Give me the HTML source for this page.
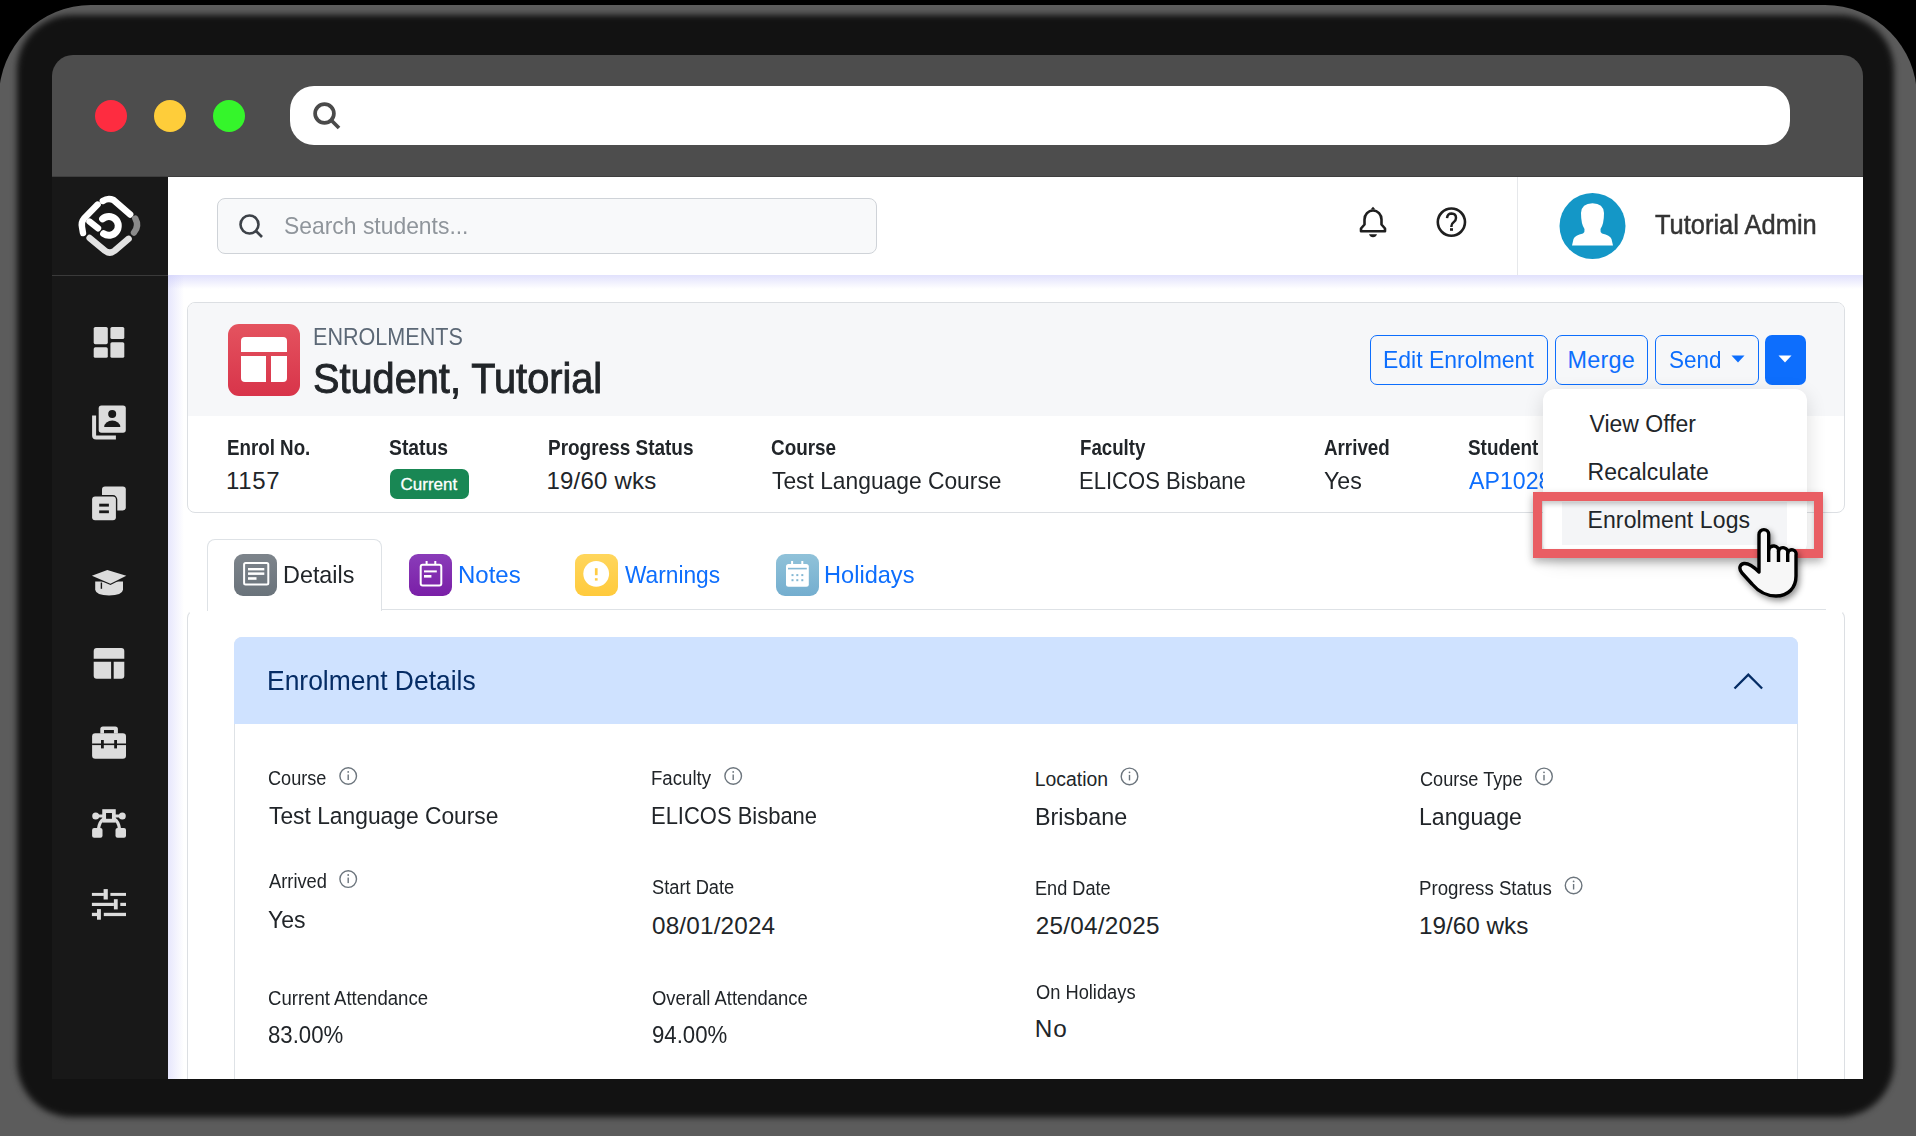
<!DOCTYPE html>
<html><head><meta charset="utf-8"><style>
html,body{margin:0;padding:0;width:1916px;height:1136px;overflow:hidden;background:#000;font-family:"Liberation Sans",sans-serif;}
.a{position:absolute;box-sizing:border-box;}
.t{position:absolute;white-space:nowrap;line-height:1;}
svg{position:absolute;overflow:visible;}
</style></head><body>
<div class="a" style="left:-1px;top:5px;width:1918px;height:1215px;border-radius:92px;background:#5c5c5c;"></div>
<div class="a" style="left:17px;top:15px;width:1877px;height:1102px;border-radius:55px;background:#121212;filter:blur(3px);"></div>

<div style="position:absolute;left:0;top:0;width:1863px;height:1079px;overflow:hidden">
<!-- title bar -->
<div class="a" style="left:52px;top:55px;width:1811px;height:122px;background:#4d4d4d;border-radius:21px 21px 0 0;"></div>
<div class="a" style="left:95px;top:100px;width:32px;height:32px;border-radius:50%;background:#fe2c40;"></div>
<div class="a" style="left:154px;top:100px;width:32px;height:32px;border-radius:50%;background:#fecd3a;"></div>
<div class="a" style="left:212.5px;top:100px;width:32px;height:32px;border-radius:50%;background:#35f52b;"></div>
<div class="a" style="left:290px;top:86.2px;width:1500.3px;height:58.7px;border-radius:24px;background:#fff;"></div>
<div class="a" style="left:52px;top:176px;width:1811px;height:1px;background:#3e3e3e;"></div>
<svg style="left:0;top:0" width="1" height="1"><circle cx="324.5" cy="113.5" r="9.4" fill="none" stroke="#4a4a4a" stroke-width="3.7"/><line x1="331.5" y1="120.5" x2="339" y2="128" stroke="#4a4a4a" stroke-width="3.7"/></svg>
<!-- sidebar -->
<div class="a" style="left:52px;top:177px;width:116px;height:902px;background:#181818;"></div>
<div class="a" style="left:52px;top:275px;width:116px;height:1px;background:#3a3a3a;"></div>
<!-- main -->
<div class="a" style="left:168px;top:177px;width:1695px;height:902px;background:#fff;"></div>
<div class="a" style="left:168px;top:177px;width:16px;height:902px;background:linear-gradient(to right,rgba(225,225,252,.8),rgba(255,255,255,0));"></div>
<div class="a" style="left:168px;top:177px;width:1695px;height:98px;background:#fff;"></div>
<div class="a" style="left:168px;top:275px;width:1695px;height:14px;background:linear-gradient(rgba(200,200,250,.55),rgba(255,255,255,0));"></div>
<div class="a" style="left:1517px;top:177px;width:1px;height:98px;background:#e6e8eb;"></div>
<!-- search -->
<div class="a" style="left:217px;top:198px;width:660px;height:56px;background:#f8f9fa;border:1px solid #cfd3d8;border-radius:8px;"></div>
<svg style="left:0;top:0" width="1" height="1"><circle cx="249.5" cy="224.5" r="9" fill="none" stroke="#3d4248" stroke-width="2.6"/><line x1="256" y1="231" x2="262" y2="237" stroke="#3d4248" stroke-width="2.6"/></svg>
<!-- card 1 -->
<div class="a" style="left:187px;top:302px;width:1658px;height:211px;background:#fff;border:1px solid #dcdfe3;border-radius:8px;overflow:hidden;">
  <div class="a" style="left:0;top:0;width:100%;height:113px;background:#f6f7f9;"></div>
</div>
<div class="a" style="left:228px;top:324px;width:72px;height:72px;border-radius:11px;background:linear-gradient(#e4535f,#d8344a);"></div>
<div class="a" style="left:241px;top:336.5px;width:45.5px;height:15.5px;background:#fff;border-radius:4px 4px 0 0;"></div>
<div class="a" style="left:241px;top:356px;width:25px;height:25.5px;background:#fff;border-radius:0 0 0 4px;"></div>
<div class="a" style="left:270.5px;top:356px;width:16px;height:25.5px;background:#fff;border-radius:0 0 4px 0;"></div>
<!-- badge -->
<div class="a" style="left:390px;top:469px;width:78.5px;height:30px;border-radius:7px;background:#198754;"></div>
<!-- buttons -->
<div class="a" style="left:1370px;top:335px;width:177.5px;height:49.5px;border:1.5px solid #0d6efd;border-radius:7px;"></div>
<div class="a" style="left:1555px;top:335px;width:92.5px;height:49.5px;border:1.5px solid #0d6efd;border-radius:7px;"></div>
<div class="a" style="left:1655px;top:335px;width:103.6px;height:49.5px;border:1.5px solid #0d6efd;border-radius:7px;"></div>
<div class="a" style="left:1765px;top:335px;width:40.6px;height:49.5px;background:#0d6efd;border-radius:7px;"></div>
<svg style="left:0;top:0" width="1" height="1"><path d="M1731.5 355.5h13l-6.5 7z" fill="#0d6efd"/><path d="M1778.5 355.5h13l-6.5 7z" fill="#fff"/></svg>
<!-- tabs -->
<div class="a" style="left:187px;top:610px;width:1658px;height:480px;border:1px solid #dcdfe3;border-top-color:transparent;border-radius:8px 8px 0 0;"></div>
<div class="a" style="left:381px;top:609px;width:1445px;height:1px;background:#dee2e6;"></div>
<div class="a" style="left:207px;top:539px;width:175px;height:72px;background:#fff;border:1px solid #dee2e6;border-bottom:none;border-radius:8px 8px 0 0;"></div>
<!-- tab icons -->
<div class="a" style="left:234px;top:554px;width:43px;height:42px;border-radius:9px;background:linear-gradient(#7d848b,#6a737b);"></div>
<div class="a" style="left:409px;top:554px;width:43px;height:42px;border-radius:9px;background:linear-gradient(#8a3cb9,#7a1fa7);"></div>
<div class="a" style="left:575px;top:554px;width:43px;height:42px;border-radius:9px;background:linear-gradient(#ffd65c,#ffca3c);"></div>
<div class="a" style="left:776px;top:554px;width:43px;height:42px;border-radius:9px;background:linear-gradient(#90c2d9,#74aecf);"></div>
<!-- accordion -->
<div class="a" style="left:234px;top:637px;width:1564px;height:460px;border:1px solid #dee2e6;border-radius:8px 8px 0 0;"></div>
<div class="a" style="left:234px;top:637px;width:1564px;height:87px;background:#cfe2ff;border-radius:8px 8px 0 0;"></div>
<svg style="left:0;top:0" width="1" height="1"><path d="M1734.5 688.5l13.8-13.8 13.8 13.8" fill="none" stroke="#052c65" stroke-width="2.3"/></svg>

<div class="t" id="ph" style="left:284.0px;top:215.0px;font-size:23.4px;color:#8f959b;font-weight:400;transform:scaleX(0.9785);transform-origin:0 0;">Search students...</div>
<div class="t" id="admin" style="left:1655.0px;top:211.0px;font-size:27.5px;color:#343434;font-weight:400;transform:scaleX(0.9253);transform-origin:0 0;-webkit-text-stroke:0.5px #343434;">Tutorial Admin</div>
<div class="t" id="enr" style="left:312.9px;top:325.0px;font-size:24px;color:#5c6876;font-weight:400;transform:scaleX(0.8994);transform-origin:0 0;">ENROLMENTS</div>
<div class="t" id="stu" style="left:312.8px;top:358.0px;font-size:42.5px;color:#212529;font-weight:400;transform:scaleX(0.9344);transform-origin:0 0;-webkit-text-stroke:0.9px #212529;">Student, Tutorial</div>
<div class="t" id="l1" style="left:227.1px;top:437.0px;font-size:22px;color:#212529;font-weight:700;transform:scaleX(0.8521);transform-origin:0 0;">Enrol No.</div>
<div class="t" id="l2" style="left:388.7px;top:437.0px;font-size:22px;color:#212529;font-weight:700;transform:scaleX(0.8788);transform-origin:0 0;">Status</div>
<div class="t" id="l3" style="left:547.5px;top:437.0px;font-size:22px;color:#212529;font-weight:700;transform:scaleX(0.8623);transform-origin:0 0;">Progress Status</div>
<div class="t" id="l4" style="left:771.3px;top:437.0px;font-size:22px;color:#212529;font-weight:700;transform:scaleX(0.8581);transform-origin:0 0;">Course</div>
<div class="t" id="l5" style="left:1080.4px;top:437.0px;font-size:22px;color:#212529;font-weight:700;transform:scaleX(0.8487);transform-origin:0 0;">Faculty</div>
<div class="t" id="l6" style="left:1324.1px;top:437.0px;font-size:22px;color:#212529;font-weight:700;transform:scaleX(0.8533);transform-origin:0 0;">Arrived</div>
<div class="t" id="l7" style="left:1467.9px;top:437.0px;font-size:22px;color:#212529;font-weight:700;transform:scaleX(0.8580);transform-origin:0 0;">Student</div>
<div class="t" id="v1" style="left:226.0px;top:469.0px;font-size:24px;color:#212529;font-weight:400;letter-spacing:0.667px;">1157</div>
<div class="t" id="v3" style="left:546.4px;top:469.0px;font-size:24px;color:#212529;font-weight:400;letter-spacing:0.213px;">19/60 wks</div>
<div class="t" id="v4" style="left:772.2px;top:469.0px;font-size:24px;color:#212529;font-weight:400;transform:scaleX(0.9502);transform-origin:0 0;">Test Language Course</div>
<div class="t" id="v5" style="left:1079.4px;top:469.0px;font-size:24px;color:#212529;font-weight:400;transform:scaleX(0.9191);transform-origin:0 0;">ELICOS Bisbane</div>
<div class="t" id="v6" style="left:1324.0px;top:469.0px;font-size:24px;color:#212529;font-weight:400;transform:scaleX(0.9658);transform-origin:0 0;">Yes</div>
<div class="t" id="v7" style="left:1468.8px;top:469.0px;font-size:24px;color:#0d6efd;font-weight:400;transform:scaleX(0.9647);transform-origin:0 0;">AP1028</div>
<div class="t" id="badge" style="left:400.5px;top:476.0px;font-size:17px;color:#ffffff;font-weight:400;letter-spacing:0.000px;-webkit-text-stroke:0.3px #fff;">Current</div>
<div class="t" id="b1" style="left:1382.6px;top:349.0px;font-size:23.4px;color:#0d6efd;font-weight:400;transform:scaleX(0.9828);transform-origin:0 0;">Edit Enrolment</div>
<div class="t" id="b2" style="left:1567.5px;top:349.0px;font-size:23.4px;color:#0d6efd;font-weight:400;letter-spacing:0.250px;">Merge</div>
<div class="t" id="b3" style="left:1668.8px;top:349.0px;font-size:23.4px;color:#0d6efd;font-weight:400;transform:scaleX(0.9615);transform-origin:0 0;">Send</div>
<div class="t" id="d1" style="left:1589.5px;top:413.0px;font-size:23px;color:#212529;font-weight:400;letter-spacing:0.000px;z-index:6;">View Offer</div>
<div class="t" id="d2" style="left:1587.5px;top:461.0px;font-size:23px;color:#212529;font-weight:400;letter-spacing:0.100px;z-index:6;">Recalculate</div>
<div class="t" id="d3" style="left:1587.5px;top:509.0px;font-size:23px;color:#212529;font-weight:400;letter-spacing:0.115px;z-index:6;">Enrolment Logs</div>
<div class="t" id="t1" style="left:283.0px;top:563.0px;font-size:24.4px;color:#212529;font-weight:400;transform:scaleX(0.9583);transform-origin:0 0;">Details</div>
<div class="t" id="t2" style="left:457.6px;top:563.0px;font-size:24.4px;color:#0d6efd;font-weight:400;transform:scaleX(0.9836);transform-origin:0 0;">Notes</div>
<div class="t" id="t3" style="left:625.0px;top:563.0px;font-size:24.4px;color:#0d6efd;font-weight:400;transform:scaleX(0.9314);transform-origin:0 0;">Warnings</div>
<div class="t" id="t4" style="left:823.9px;top:563.0px;font-size:24.4px;color:#0d6efd;font-weight:400;transform:scaleX(0.9670);transform-origin:0 0;">Holidays</div>
<div class="t" id="acc" style="left:267.3px;top:666.0px;font-size:28.5px;color:#052c65;font-weight:400;transform:scaleX(0.9279);transform-origin:0 0;">Enrolment Details</div>
<div class="t" id="g1l" style="left:268.0px;top:769.0px;font-size:19.4px;color:#212529;font-weight:400;transform:scaleX(0.9344);transform-origin:0 0;">Course</div>
<div class="t" id="g1v" style="left:268.9px;top:804.0px;font-size:24.3px;color:#212529;font-weight:400;transform:scaleX(0.9385);transform-origin:0 0;">Test Language Course</div>
<div class="t" id="g2l" style="left:651.1px;top:769.0px;font-size:19.4px;color:#212529;font-weight:400;transform:scaleX(0.9600);transform-origin:0 0;">Faculty</div>
<div class="t" id="g2v" style="left:651.2px;top:804.0px;font-size:24.3px;color:#212529;font-weight:400;transform:scaleX(0.9039);transform-origin:0 0;">ELICOS Bisbane</div>
<div class="t" id="g3l" style="left:1034.8px;top:770.0px;font-size:19.4px;color:#212529;font-weight:400;letter-spacing:0.000px;">Location</div>
<div class="t" id="g3v" style="left:1034.9px;top:805.0px;font-size:24.3px;color:#212529;font-weight:400;transform:scaleX(0.9613);transform-origin:0 0;">Brisbane</div>
<div class="t" id="g4l" style="left:1420.0px;top:770.0px;font-size:19.4px;color:#212529;font-weight:400;transform:scaleX(0.9352);transform-origin:0 0;">Course Type</div>
<div class="t" id="g4v" style="left:1419.0px;top:805.0px;font-size:24.3px;color:#212529;font-weight:400;transform:scaleX(0.9524);transform-origin:0 0;">Language</div>
<div class="t" id="g5l" style="left:268.9px;top:872.0px;font-size:19.4px;color:#212529;font-weight:400;transform:scaleX(0.9433);transform-origin:0 0;">Arrived</div>
<div class="t" id="g5v" style="left:268.0px;top:908.0px;font-size:24.3px;color:#212529;font-weight:400;transform:scaleX(0.9474);transform-origin:0 0;">Yes</div>
<div class="t" id="g6l" style="left:652.1px;top:878.0px;font-size:19.4px;color:#212529;font-weight:400;transform:scaleX(0.9419);transform-origin:0 0;">Start Date</div>
<div class="t" id="g6v" style="left:652.0px;top:914.0px;font-size:24.3px;color:#212529;font-weight:400;letter-spacing:0.167px;">08/01/2024</div>
<div class="t" id="g7l" style="left:1034.9px;top:879.0px;font-size:19.4px;color:#212529;font-weight:400;transform:scaleX(0.9359);transform-origin:0 0;">End Date</div>
<div class="t" id="g7v" style="left:1035.8px;top:914.0px;font-size:24.3px;color:#212529;font-weight:400;letter-spacing:0.222px;">25/04/2025</div>
<div class="t" id="g8l" style="left:1419.0px;top:879.0px;font-size:19.4px;color:#212529;font-weight:400;transform:scaleX(0.9630);transform-origin:0 0;">Progress Status</div>
<div class="t" id="g8v" style="left:1418.9px;top:914.0px;font-size:24.3px;color:#212529;font-weight:400;letter-spacing:0.000px;">19/60 wks</div>
<div class="t" id="g9l" style="left:267.9px;top:989.0px;font-size:19.4px;color:#212529;font-weight:400;transform:scaleX(0.9576);transform-origin:0 0;">Current Attendance</div>
<div class="t" id="g9v" style="left:268.0px;top:1023.0px;font-size:24.3px;color:#212529;font-weight:400;transform:scaleX(0.9136);transform-origin:0 0;">83.00%</div>
<div class="t" id="g10l" style="left:652.0px;top:989.0px;font-size:19.4px;color:#212529;font-weight:400;transform:scaleX(0.9506);transform-origin:0 0;">Overall Attendance</div>
<div class="t" id="g10v" style="left:652.1px;top:1023.0px;font-size:24.3px;color:#212529;font-weight:400;transform:scaleX(0.9136);transform-origin:0 0;">94.00%</div>
<div class="t" id="g11l" style="left:1035.9px;top:983.0px;font-size:19.4px;color:#212529;font-weight:400;transform:scaleX(0.9423);transform-origin:0 0;">On Holidays</div>
<div class="t" id="g11v" style="left:1034.8px;top:1017.0px;font-size:24.3px;color:#212529;font-weight:400;letter-spacing:1.000px;">No</div>
<!-- logo -->
<svg style="left:72px;top:188px" width="76" height="76" viewBox="0 0 76 76">
<g fill="none" stroke-linecap="round" stroke-linejoin="round" stroke-width="6.4">
<path d="M30.8 13 Q36 9.5 41.5 12 L58.2 26.5" stroke="#fff"/>
<path d="M25.6 16.6 L12 30.5 Q9 34 10 39 L11 45" stroke="#fff"/>
<path d="M17.5 33.6 L26 40.3" stroke="#fff"/>
<path d="M30.6 30.9 A9.4 9.4 0 1 1 31.6 45.7" stroke="#fff" stroke-width="7"/>
<path d="M17.6 50 L33 62.8 Q37.8 66.5 42.6 62.8 L56.6 50.8" stroke="#e2e2e2"/>
<path d="M63.3 30.5 Q67.5 38 62 44.5" stroke="#8a8a8a"/>
</g></svg>
<svg style="left:0;top:0" width="1" height="1">
<g fill="#dcdcdc">
<rect x="93.7" y="327" width="14.1" height="17.2" rx="1.6"/><rect x="93.7" y="347.3" width="14.1" height="10.5" rx="1.6"/>
<rect x="110.4" y="327" width="13.9" height="12.1" rx="1.6"/><rect x="110.4" y="342.2" width="13.9" height="15.6" rx="1.6"/>
</g>
<rect x="98.7" y="405.5" width="27.1" height="27.3" rx="2.8" fill="#dcdcdc"/>
<circle cx="112.2" cy="414.1" r="4" fill="#181818"/>
<path d="M104.2 427 A8.05 6.4 0 0 1 120.3 427 Z" fill="#181818"/>
<path d="M94.1 415.6 V435.4 Q94.1 437.4 96.1 437.4 H115.9" fill="none" stroke="#dcdcdc" stroke-width="4"/>
<rect x="102" y="486.6" width="23.8" height="23.8" rx="3" fill="#dcdcdc"/>
<rect x="92.1" y="496.5" width="23.8" height="23.8" rx="3" fill="#dcdcdc" stroke="#181818" stroke-width="2.8"/>
<rect x="92.1" y="496.5" width="23.8" height="23.8" rx="3" fill="#dcdcdc"/>
<rect x="99.2" y="503.7" width="9.7" height="2.9" fill="#181818"/><rect x="99.2" y="510.4" width="9.7" height="2.8" fill="#181818"/>
<path d="M95.2 581.5 V589.7 Q96 595.4 109.1 595.4 Q122.2 595.4 123 589.7 V581.5 Z" fill="#dcdcdc"/>
<path d="M91.9 575.8 L107.3 570.1 L126.3 575.8 L110.4 583.7 Z" fill="#dcdcdc" stroke="#181818" stroke-width="2.4" stroke-linejoin="round"/>
<path d="M91.9 575.8 L107.3 570.1 L126.3 575.8 L110.4 583.7 Z" fill="#dcdcdc"/>
<line x1="101.4" y1="582.5" x2="101.4" y2="588.8" stroke="#181818" stroke-width="1.4"/>
<path d="M93.7 658.7 V651.1 Q93.7 648.1 96.7 648.1 H121.3 Q124.3 648.1 124.3 651.1 V658.7 Z" fill="#dcdcdc"/>
<path d="M93.7 661.8 H111.1 V678.7 H96.7 Q93.7 678.7 93.7 675.7 Z" fill="#dcdcdc"/>
<path d="M113.7 661.8 H124.3 V675.7 Q124.3 678.7 121.3 678.7 H113.7 Z" fill="#dcdcdc"/>
<rect x="92.1" y="733.2" width="33.9" height="25.5" rx="3.2" fill="#dcdcdc"/>
<path d="M100.3 733.5 V729 Q100.3 726.4 102.9 726.4 H115.3 Q117.9 726.4 117.9 729 V733.5 H113.9 V730.1 H104 V733.5 Z" fill="#dcdcdc"/>
<rect x="92.1" y="743.5" width="33.9" height="1.6" fill="#181818"/>
<rect x="101" y="740" width="2.8" height="8.4" fill="#181818"/><rect x="114.2" y="740" width="2.8" height="8.4" fill="#181818"/>
<rect x="104.15" y="811.1" width="9.7" height="9.6" fill="none" stroke="#dcdcdc" stroke-width="3.8"/>
<circle cx="95.7" cy="816" r="3.5" fill="#dcdcdc"/><circle cx="122.3" cy="816" r="3.5" fill="#dcdcdc"/>
<path d="M96 816 H103 M115 816 H122" stroke="#dcdcdc" stroke-width="3"/>
<path d="M98.6 828.5 Q99.5 821.5 103.5 819 M114.5 819 Q118.5 821.5 119.4 828.5" fill="none" stroke="#dcdcdc" stroke-width="3.2"/>
<rect x="92.1" y="827.9" width="10.4" height="9.9" rx="2" fill="#dcdcdc"/><rect x="115.5" y="827.9" width="10.5" height="9.9" rx="2" fill="#dcdcdc"/>
<g fill="#dcdcdc">
<rect x="91.9" y="892.9" width="12" height="3"/><rect x="103.6" y="889.1" width="4.2" height="10.4"/><rect x="110.4" y="892.9" width="15.6" height="3"/>
<rect x="91.9" y="902.8" width="22" height="3.2"/><rect x="113.9" y="899.2" width="3.8" height="10.2"/><rect x="120.3" y="902.8" width="5.7" height="3.2"/>
<rect x="91.9" y="912.8" width="5.3" height="3.3"/><rect x="97" y="909.1" width="3.9" height="10.6"/><rect x="103.8" y="912.8" width="22.2" height="3.3"/>
</g>
<!-- bell -->
<path d="M1364.5 224.5 V219.5 A8.5 9 0 0 1 1381.5 219.5 V224.5 L1385 228.5 V231.2 H1361 V228.5 Z" fill="none" stroke="#1f1f1f" stroke-width="2.6" stroke-linejoin="round"/>
<path d="M1370.5 209.5 L1373 206.8 L1375.5 209.5 Z" fill="#1f1f1f"/>
<path d="M1369 234.3 H1377 Q1376 237.2 1373 237.2 Q1370 237.2 1369 234.3 Z" fill="#1f1f1f"/>
<!-- help -->
<circle cx="1451.4" cy="222.1" r="13.6" fill="none" stroke="#1f1f1f" stroke-width="2.6"/>
<path d="M1447 218.2 Q1447.5 213.6 1451.6 213.6 Q1456 213.8 1456 218 Q1456 220.6 1453.6 222.2 Q1451.4 223.6 1451.4 226.2 V227" fill="none" stroke="#1f1f1f" stroke-width="2.5"/>
<rect x="1450" y="228.2" width="3" height="2.6" fill="#1f1f1f"/>
<!-- avatar -->
<circle cx="1592.5" cy="226" r="33" fill="#1497c7"/>
<path d="M1572 245.5 L1573.5 239 Q1575 235 1583 233.5 Q1585 232 1584.5 229 Q1581 224 1581 213 Q1581.5 203.5 1592.5 203.3 Q1603.5 203.5 1604 213 Q1604 224 1600.5 229 Q1600 232 1602 233.5 Q1610 235 1611.5 239 L1613 245.5 Z" fill="#fff"/>
<!-- tab icon internals -->
<rect x="244.1" y="563" width="24.2" height="21.6" rx="1.5" fill="none" stroke="#fff" stroke-width="2"/>
<rect x="248" y="568" width="16.3" height="2.4" fill="#fff"/><rect x="248" y="572.4" width="16.3" height="2.5" fill="#fff"/><rect x="248" y="577.2" width="8.5" height="2.6" fill="#fff"/>
<rect x="420.7" y="564.7" width="20.6" height="20.8" rx="2" fill="none" stroke="#fff" stroke-width="2"/>
<rect x="425.6" y="561" width="2" height="4" fill="#fff"/><rect x="434.3" y="561" width="2" height="4" fill="#fff"/>
<rect x="424" y="570.4" width="12.8" height="2" fill="#fff"/><rect x="424" y="575" width="7.4" height="2.6" fill="#fff"/>
<circle cx="596.2" cy="573.8" r="12.9" fill="#fff"/>
<rect x="594.9" y="568.2" width="2.7" height="7" fill="#ffcc44"/><rect x="594.9" y="578.2" width="2.7" height="2.4" fill="#ffcc44"/>
<rect x="786" y="564" width="22.8" height="22.7" rx="2.5" fill="#fff"/>
<rect x="791.1" y="561" width="2" height="4" fill="#fff"/><rect x="801.3" y="561" width="2" height="4" fill="#fff"/>
<rect x="788" y="567.8" width="18.8" height="1.6" fill="#84b8d4"/>
<g fill="#84b8d4"><rect x="791.5" y="574.1" width="2" height="2"/><rect x="796.3" y="574.1" width="2" height="2"/><rect x="801.3" y="574.1" width="2" height="2"/><rect x="791.5" y="579.2" width="2" height="2"/><rect x="796.3" y="579.2" width="2" height="2"/><rect x="801.3" y="579.2" width="2" height="2"/></g>
<!-- info icons -->
<g fill="none" stroke="#6c757d" stroke-width="1.4">
<circle cx="348.2" cy="776" r="8.3"/><circle cx="733.2" cy="776" r="8.3"/><circle cx="1129.5" cy="776.4" r="8.3"/><circle cx="1544" cy="776.4" r="8.3"/><circle cx="348.2" cy="879.1" r="8.3"/><circle cx="1573.6" cy="885.5" r="8.3"/>
</g>
<g fill="#6c757d">
<rect x="347.5" y="774.5" width="1.4" height="5.5"/><circle cx="348.2" cy="771.9" r=".9"/>
<rect x="732.5" y="774.5" width="1.4" height="5.5"/><circle cx="733.2" cy="771.9" r=".9"/>
<rect x="1128.8" y="774.9" width="1.4" height="5.5"/><circle cx="1129.5" cy="772.3" r=".9"/>
<rect x="1543.3" y="774.9" width="1.4" height="5.5"/><circle cx="1544" cy="772.3" r=".9"/>
<rect x="347.5" y="877.6" width="1.4" height="5.5"/><circle cx="348.2" cy="875" r=".9"/>
<rect x="1572.9" y="884" width="1.4" height="5.5"/><circle cx="1573.6" cy="881.4" r=".9"/>
</g>
</svg>
<!-- dropdown -->
<div class="a" style="z-index:5;left:1543px;top:389px;width:264px;height:166px;background:#fff;border-radius:12px;box-shadow:0 6px 20px rgba(0,0,0,.14);"></div>
<div class="a" style="z-index:5;left:1562px;top:501.5px;width:225px;height:43px;background:#f4f5f7;"></div>
<div class="a" style="z-index:7;left:1533px;top:492.4px;width:289.5px;height:65.4px;border:9px solid #e95e63;box-shadow:0 4px 8px rgba(0,0,0,.28), inset 0 3px 5px rgba(0,0,0,.22);"></div>
<svg style="z-index:8;left:1720px;top:500px;filter:drop-shadow(2px 3px 3px rgba(0,0,0,.45))" width="110" height="110" viewBox="0 0 110 110">
<path d="M39 72 L39 34.5 A4.85 4.85 0 0 1 48.7 34.5 L48.7 50 A4.9 4.5 0 0 1 58.5 51 A4.6 4.2 0 0 1 67.7 53 A4.2 4.2 0 0 1 76 55 L76 76 C76 88 68 96 56 96 C46 96 38 91 32 84 L22 73 C18.5 69 19.5 64 24 63.5 C28 63 33 66 39 72 Z" fill="#f7f7f7" stroke="#000" stroke-width="3.4" stroke-linejoin="round"/>
<path d="M48.7 50 V62 M58.5 51 V62 M67.7 53 V62" stroke="#000" stroke-width="3.4"/>
</svg>

</div>
</body></html>
